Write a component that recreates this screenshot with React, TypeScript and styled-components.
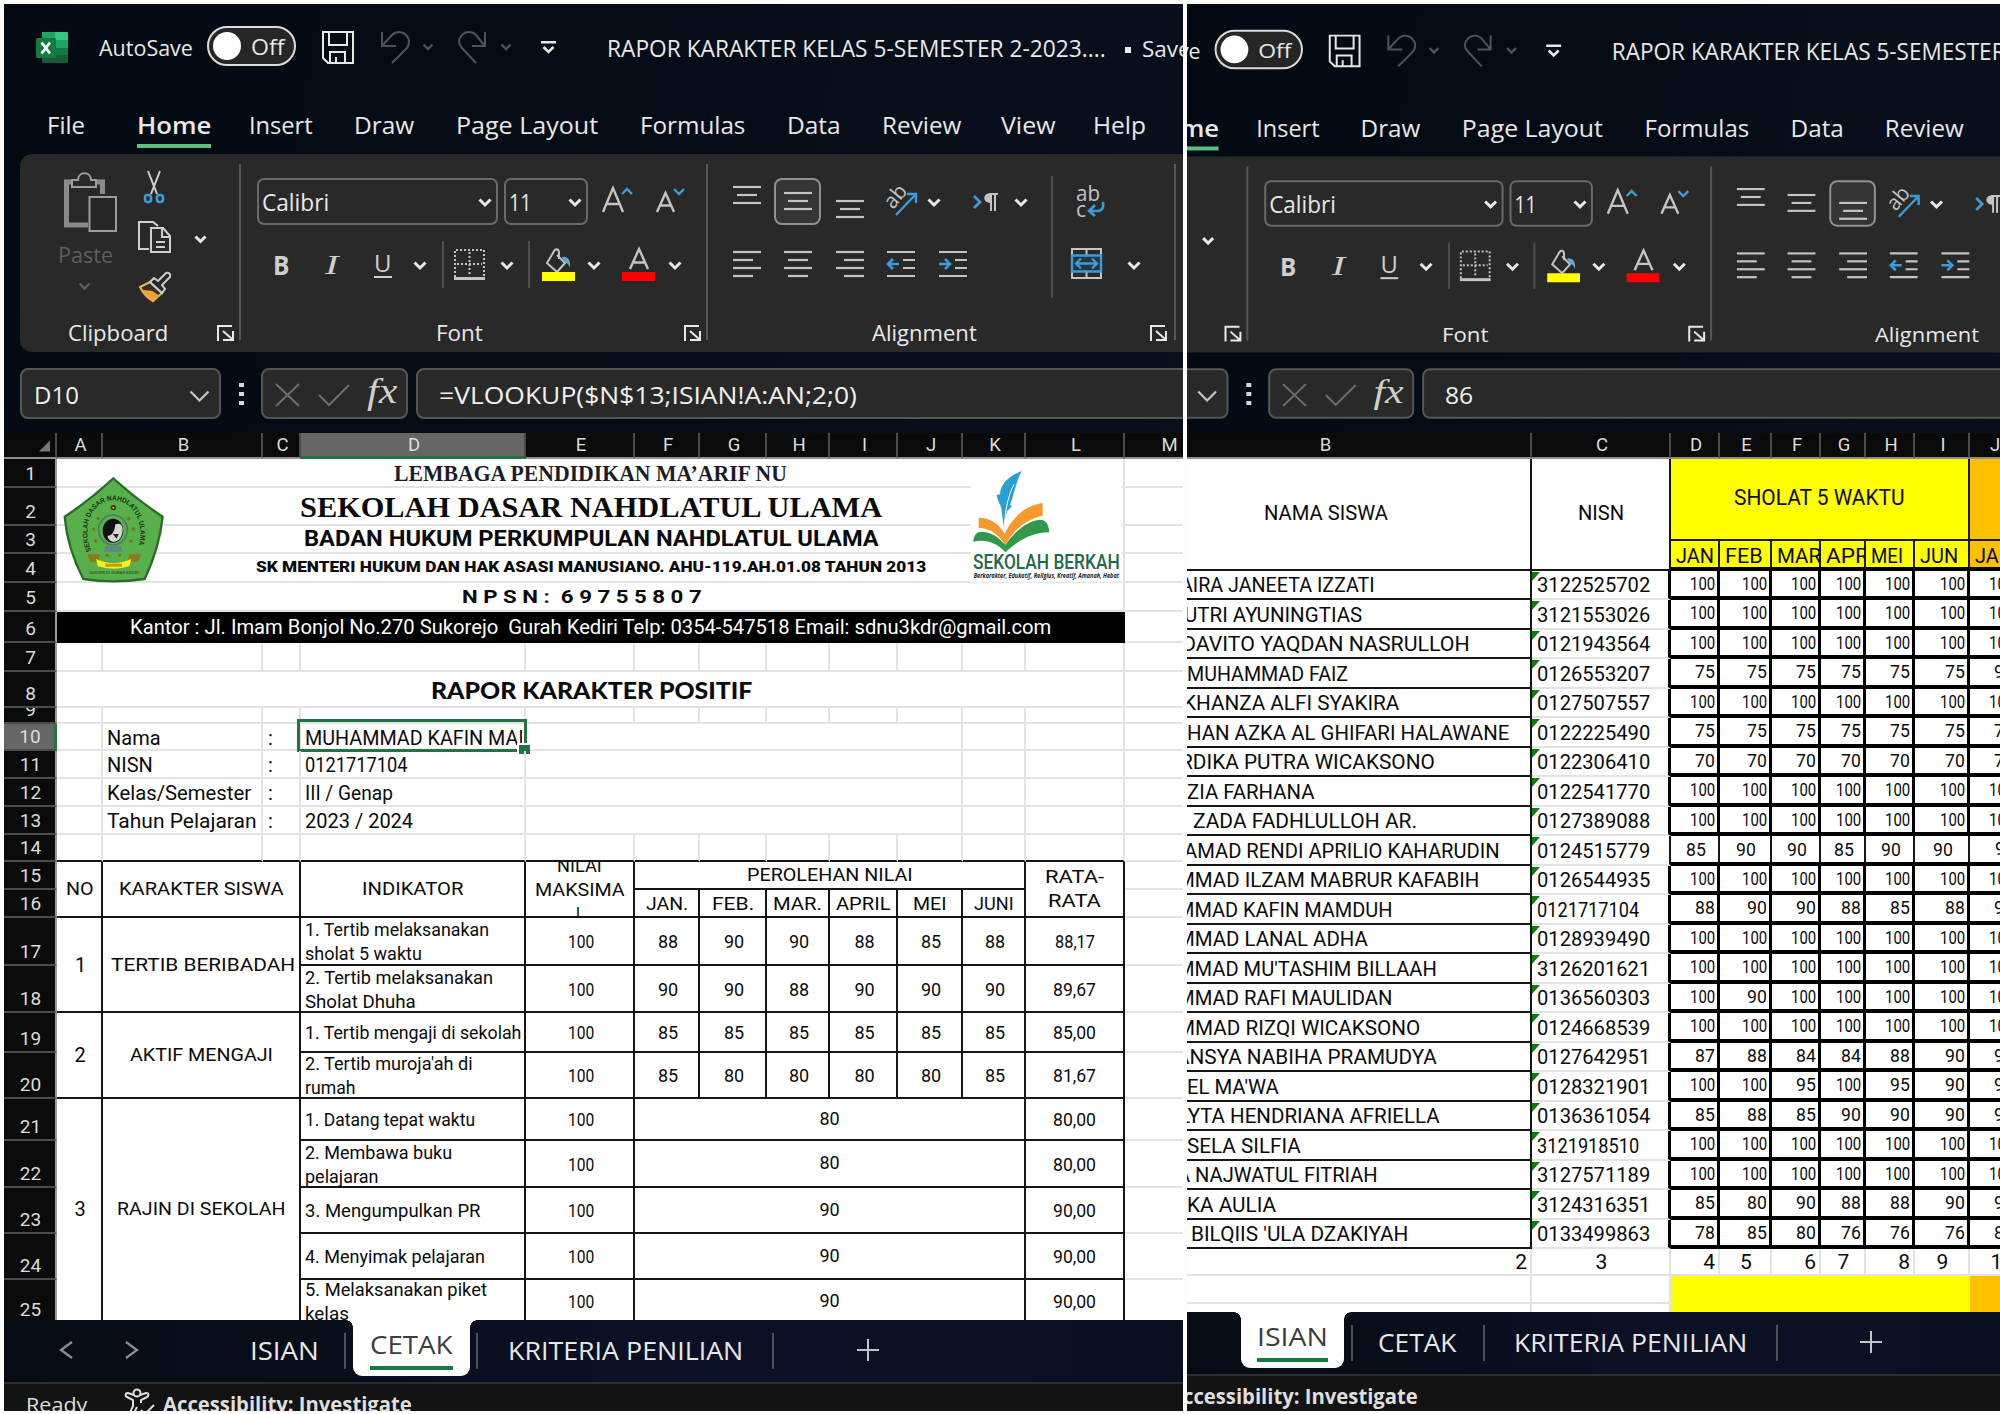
import React, { useLayoutEffect, useRef, useState } from 'react';
import styled, { createGlobalStyle, css } from 'styled-components';

const UI = '"Open Sans", "Noto Sans", sans-serif';
const GRID = 'Roboto, "Liberation Sans", sans-serif';
const INK = '#e8e8e8';
const BLUE = '#3f9bd8';
const BLACK = '#161616';
const LIGHT = '#e3e3e3';

const Global = createGlobalStyle`
  *, *::before, *::after { box-sizing: border-box; }
  body { margin: 0; background: #fdfdfd; overflow: hidden; }
`;

/* ---------- text that fills a known width ---------- */

const Slot = styled.span<{ $w: number }>`
  display: inline-block;
  flex: none;
  width: ${(p) => p.$w}px;
  white-space: pre;
  text-align: left;
`;
const Glyphs = styled.span`
  display: inline-block;
  transform-origin: 0 50%;
`;

function Fit({ w, children }: { w: number; children: React.ReactNode }) {
  const ref = useRef<HTMLSpanElement>(null);
  const [k, setK] = useState(1);
  useLayoutEffect(() => {
    if (ref.current && ref.current.offsetWidth) setK(w / ref.current.offsetWidth);
  }, [w, children]);
  return (
    <Slot $w={w}>
      <Glyphs ref={ref} style={{ transform: `scaleX(${k})` }}>{children}</Glyphs>
    </Slot>
  );
}

/* ---------- page frame ---------- */

const Page = styled.div`
  display: flex;
  gap: 4px;
  width: 2000px;
  height: 1414px;
  padding: 4px 0 3px 4px;
  background: #fdfdfd;
  overflow: hidden;
  font-family: ${UI};
`;
const Window = styled.section<{ $w: number }>`
  display: flex;
  flex-direction: column;
  flex: none;
  width: ${(p) => p.$w}px;
  height: 1407px;
  overflow: hidden;
  background: linear-gradient(100deg, #040a12 0%, #060c16 45%, #0a1020 100%);
`;
const ChromeSlot = styled.div`
  flex: none;
  height: 429px;
  overflow: hidden;
`;
const Chrome = styled.div<{ $shifted: boolean }>`
  width: 1179px;
  height: 440px;
  transform-origin: 0 0;
  ${(p) => p.$shifted && css`transform: translate(-174px, 3.9px) scale(0.993, 0.99);`}
`;

const Svg = styled.svg<{ $ml?: number; $mt?: number }>`
  display: block;
  flex: none;
  overflow: visible;
  margin-left: ${(p) => p.$ml ?? 0}px;
  margin-top: ${(p) => p.$mt ?? 0}px;
`;

/* ---------- title bar ---------- */

const TitleBar = styled.div`
  display: flex;
  align-items: center;
  height: 86px;
  color: ${INK};
`;
const TitleText = styled.span<{ $ml: number; $size: number; $mt?: number }>`
  display: flex;
  flex: none;
  margin-left: ${(p) => p.$ml}px;
  margin-top: ${(p) => p.$mt ?? 2}px;
  font-size: ${(p) => p.$size}px;
`;
const Toggle = styled.span`
  display: flex;
  flex: none;
  align-items: center;
  gap: 10px;
  width: 89px;
  height: 40px;
  margin: -3px 0 0 14px;
  padding-left: 4px;
  border: 2px solid #dcdcdc;
  border-radius: 20px;
  background: #262626;
  font-size: 21px;
`;
const ToggleLabel = styled.span`
  display: flex;
  margin-top: 3px;
`;
const Knob = styled.span`
  width: 28px;
  height: 28px;
  border-radius: 50%;
  background: #fff;
`;
const Dot = styled.span`
  flex: none;
  width: 6px;
  height: 6px;
  margin: 6px 0 0 19px;
  background: ${INK};
`;

function Chevron({ ml = 0, mt = 0, w = 14, color = INK, thick = 3 }: { ml?: number; mt?: number; w?: number; color?: string; thick?: number }) {
  return (
    <Svg $ml={ml} $mt={mt} width={w} height={w / 2 + 2} viewBox={`0 0 ${w} ${w / 2 + 2}`} fill="none" stroke={color} strokeWidth={thick}>
      <path d={`M1.5 1.5 L${w / 2} ${w / 2} L${w - 1.5} 1.5`} />
    </Svg>
  );
}

function ExcelIcon() {
  return (
    <Svg $ml={32} width={33} height={33} viewBox="0 0 33 33">
      <rect x="6" y="1" width="26" height="31" rx="1.5" fill="#185c37" />
      <path d="M6 1h13v8H6z" fill="#21a366" />
      <path d="M19 1h12a1 1 0 0 1 1 1v7H19z" fill="#33c481" />
      <path d="M6 9h13v8H6z" fill="#107c41" />
      <path d="M19 9h13v8H19z" fill="#21a366" />
      <path d="M19 17h13v7H19z" fill="#107c41" />
      <rect x="0" y="7" width="20" height="20" rx="1.5" fill="#107c41" />
      <path d="M5.500 11.500l8.500 11M14 11.500l-8.500 11" stroke="#fff" strokeWidth="2.8" />
    </Svg>
  );
}

function TitleRow() {
  return (
    <TitleBar>
      <ExcelIcon />
      <TitleText $ml={30} $size={21.5} $mt={1}><Fit w={94}>AutoSave</Fit></TitleText>
      <Toggle><Knob /><ToggleLabel><Fit w={33}>Off</Fit></ToggleLabel></Toggle>
      <Svg $ml={26} width={32} height={33} viewBox="0 0 32 33" fill="none" stroke={INK} strokeWidth="2">
        <path d="M1 1h30v31H6l-5-5z" />
        <path d="M7 1v13h18V1M8 32V21h15v11M14 32v-6" />
      </Svg>
      <Svg $ml={27} width={29} height={33} viewBox="0 0 29 33" fill="none" stroke="#505256" strokeWidth="2">
        <path d="M1 1v14h14M1 15L11 4c4-4 10-4 14 0s4 10 0 14L11 32" />
      </Svg>
      <Chevron ml={12} w={12} color="#505256" thick={2.4} />
      <Svg $ml={24} width={28} height={33} viewBox="0 0 28 33" fill="none" stroke="#505256" strokeWidth="2">
        <path d="M27 1v14H14M27 15L18 4C14 0 8 0 4 4s-4 9 0 13l14 15" />
      </Svg>
      <Chevron ml={14} w={12} color="#505256" thick={2.4} />
      <Svg $ml={29} width={15} height={13} viewBox="0 0 15 13" fill="none" stroke={INK} strokeWidth="2.6">
        <path d="M0 1.2h15M2.5 6l5 5 5-5" />
      </Svg>
      <TitleText $ml={51} $size={23.5} $mt={2}><Fit w={499}>RAPOR KARAKTER KELAS 5-SEMESTER 2-2023....</Fit></TitleText>
      <Dot />
      <TitleText $ml={11} $size={22.5} $mt={3}><Fit w={62}>Saved</Fit></TitleText>
    </TitleBar>
  );
}

/* ---------- ribbon tabs ---------- */

const TabRow = styled.nav`
  display: flex;
  align-items: flex-end;
  height: 64px;
  padding-bottom: 6px;
`;
const Tab = styled.span<{ $ml: number; $on: boolean }>`
  flex: none;
  margin-left: ${(p) => p.$ml}px;
  padding-bottom: 3px;
  border-bottom: 4px solid ${(p) => (p.$on ? '#5fbf83' : 'transparent')};
  color: ${INK};
  font-size: 24px;
  font-weight: ${(p) => (p.$on ? 600 : 400)};
  line-height: 32px;
`;
const TABS: [string, number, number][] = [
  ['File', 47, 38], ['Home', 137, 74], ['Insert', 249, 64], ['Draw', 354, 60], ['Page Layout', 456, 142],
  ['Formulas', 640, 105], ['Data', 787, 54], ['Review', 882, 79], ['View', 1001, 54], ['Help', 1093, 53],
];

/* ---------- ribbon ---------- */

const Ribbon = styled.div`
  display: flex;
  flex: none;
  width: 1180px;
  height: 198px;
  margin-left: 16px;
  border-radius: 12px 0 0 12px;
  background: #292929;
`;
const Group = styled.div<{ $w: number }>`
  display: flex;
  flex: none;
  flex-direction: column;
  width: ${(p) => p.$w}px;
`;
const GroupRule = styled.i`
  flex: none;
  width: 2px;
  height: 176px;
  margin: 10px 0 0 -1px;
  background: #565656;
`;
const Rule = styled.i<{ $ml: number; $h: number }>`
  flex: none;
  width: 2px;
  height: ${(p) => p.$h}px;
  margin-left: ${(p) => p.$ml}px;
  background: #4e4e4e;
`;
const ToolRow = styled.div<{ $mt: number }>`
  display: flex;
  align-items: center;
  height: 47px;
  margin-top: ${(p) => p.$mt}px;
`;
const LabelRow = styled.div<{ $mt: number; $pl: number }>`
  display: flex;
  align-items: center;
  height: 24px;
  margin-top: ${(p) => p.$mt}px;
  padding-left: ${(p) => p.$pl}px;
  color: ${INK};
  font-size: 21px;
  line-height: 24px;
`;
const ClipBody = styled.div`
  display: flex;
  align-items: flex-start;
  height: 152px;
  margin-top: 14px;
`;
const PasteColumn = styled.div`
  width: 72px;
  margin-left: 30px;
`;
const PasteLabel = styled.div`
  margin: 9px 0 0 8px;
  color: #5f5f5f;
  font-size: 22px;
  line-height: 26px;
`;
const ClipIcons = styled.div`
  width: 36px;
  margin-left: 15px;
`;
const Combo = styled.div<{ $w: number; $ml: number }>`
  display: flex;
  flex: none;
  align-items: center;
  justify-content: space-between;
  width: ${(p) => p.$w}px;
  height: 47px;
  margin-left: ${(p) => p.$ml}px;
  padding: 0 4px 0 3px;
  border: 2px solid #6a6a6a;
  border-radius: 7px;
  color: ${INK};
  font-size: 23px;
`;
const StyleLetter = styled.span<{ $ml: number; $kind: 'b' | 'i' | 'u' }>`
  flex: none;
  margin-left: ${(p) => p.$ml}px;
  color: #cfcfcf;
  font-size: 26px;
  line-height: 28px;
  ${(p) => p.$kind === 'b' && css`font-weight: 700;`}
  ${(p) => p.$kind === 'i' && css`font-family: "Liberation Serif", serif; font-style: italic; font-size: 28px;`}
  ${(p) => p.$kind === 'u' && css`height: 28px; margin-top: -1px; border-bottom: 2px solid #cfcfcf; font-size: 24px; line-height: 26px;`}
`;
const AlignButton = styled.span<{ $on: boolean; $ml: number }>`
  display: flex;
  flex: none;
  justify-content: center;
  width: 47px;
  height: 47px;
  margin-left: ${(p) => p.$ml}px;
  border: 2px solid ${(p) => (p.$on ? '#909090' : 'transparent')};
  border-radius: 8px;
  background: ${(p) => (p.$on ? '#353535' : 'transparent')};
`;
const AlignBody = styled.div`
  display: flex;
  height: 135px;
`;
const AlignMain = styled.div`
  width: 343px;
`;
const AlignRule = styled.i`
  flex: none;
  width: 2px;
  height: 122px;
  margin-top: 22px;
  background: #4e4e4e;
`;

function Launcher({ ml }: { ml: number }) {
  return (
    <Svg $ml={ml} width={17} height={16} viewBox="0 0 17 16" fill="none" stroke={INK} strokeWidth="2">
      <path d="M1 16V1h14M6 6l9 8M16 6v9H6" />
    </Svg>
  );
}

function Bars({ rows, ml = 0, mt = 0, h = 26 }: { rows: [number, number, number][]; ml?: number; mt?: number; h?: number }) {
  return (
    <Svg $ml={ml} $mt={mt} width={28} height={h} viewBox={`0 0 28 ${h}`} stroke="#c4c4c4" strokeWidth="2.2">
      {rows.map(([a, b, y]) => <path key={y} d={`M${a} ${y}H${b}`} />)}
    </Svg>
  );
}
const threeBars = (y: number): [number, number, number][] => [[0, 28, y], [4, 24, y + 8], [0, 28, y + 16]];

function IndentIcon({ dir, ml }: { dir: 'in' | 'out'; ml: number }) {
  return (
    <Svg $ml={ml} width={28} height={26} viewBox="0 0 28 26" fill="none" stroke="#c4c4c4" strokeWidth="2.2">
      <path d="M0 1h28M16 9h12M16 17h12M0 25h28" />
      <path stroke={BLUE} strokeWidth="2.6" d={dir === 'out' ? 'M12 13H1M6 8l-5 5 5 5' : 'M0 13h11M6 8l5 5-5 5'} />
    </Svg>
  );
}

function ClipboardGroup() {
  return (
    <Group $w={220}>
      <ClipBody>
        <PasteColumn>
          <Svg $ml={13} $mt={4} width={54} height={60} viewBox="0 0 54 60" fill="none" stroke="#9c9c9c">
            <path strokeWidth="5" stroke="#8a8a8a" d="M10 10H3.500V53H25M31 10h8.500V22" />
            <path strokeWidth="2" d="M9 15V8h6c0-9 13-9 13 0h5v7z" fill="#292929" />
            <path strokeWidth="2" d="M26.500 25h26.500v34H26.500z" fill="#262626" />
          </Svg>
          <PasteLabel><Fit w={55}>Paste</Fit></PasteLabel>
          <Chevron ml={28} mt={15} w={13} color="#5f5f5f" thick={2.4} />
        </PasteColumn>
        <ClipIcons>
          <Svg $ml={6} $mt={3} width={22} height={32} viewBox="0 0 22 32" fill="none" stroke="#cfcfcf" strokeWidth="2">
            <path d="M5 0l9 23M17 0L8 23" />
            <rect x="2" y="24" width="6" height="7" rx="2.500" stroke={BLUE} strokeWidth="2.600" />
            <rect x="14" y="24" width="6" height="7" rx="2.500" stroke={BLUE} strokeWidth="2.600" />
          </Svg>
          <Svg $ml={1} $mt={18} width={33} height={32} viewBox="0 0 33 32" fill="none" stroke="#cfcfcf" strokeWidth="2">
            <path d="M11 28H1V1h14l5 4" />
            <path d="M13 7h12l7 8v16H13zM24 7v9h8M18 21h9M18 26h9" />
          </Svg>
          <Svg $ml={2} $mt={19} width={32} height={30} viewBox="0 0 32 30" fill="none" strokeWidth="2">
            <path d="M1 15l10-5 12 11-9 8C8 26 4 21 1 15z" fill="#3a3020" stroke="#e8b35a" />
            <path d="M5 19l8 1 6 4-5 5z" fill="#f0a33a" stroke="#f0a33a" />
            <path d="M11 10l4-4 4 3 8-8c3-1 5 1 4 4l-8 8 3 4-3 4z" stroke="#cfcfcf" fill="#292929" />
          </Svg>
        </ClipIcons>
        <Chevron ml={21} mt={67} w={13} />
      </ClipBody>
      <LabelRow $mt={1} $pl={48}><Fit w={100}>Clipboard</Fit><Launcher ml={49} /></LabelRow>
    </Group>
  );
}

function FontGroup() {
  return (
    <Group $w={466}>
      <ToolRow $mt={24}>
        <Combo $w={241} $ml={16}><Fit w={67}>Calibri</Fit><Chevron mt={2} /></Combo>
        <Combo $w={84} $ml={6}><Fit w={22}>11</Fit><Chevron mt={2} /></Combo>
        <Svg $ml={14} $mt={-3} width={31} height={26} viewBox="0 0 31 26" fill="none" stroke="#c4c4c4" strokeWidth="2.4">
          <path d="M1 25L11 1l10 24M4.500 17h13" />
          <path stroke={BLUE} d="M20 7l5-5 5 5" />
        </Svg>
        <Svg $ml={23} $mt={-3} width={29} height={26} viewBox="0 0 29 26" fill="none" stroke="#c4c4c4" strokeWidth="2.4">
          <path d="M1 25L9.500 6 18 25M4 18.500h11" />
          <path stroke={BLUE} d="M18 2l5 5 5-5" />
        </Svg>
      </ToolRow>
      <ToolRow $mt={16}>
        <StyleLetter $ml={32} $kind="b"><Fit w={16}>B</Fit></StyleLetter>
        <StyleLetter $ml={36} $kind="i"><Fit w={13}>I</Fit></StyleLetter>
        <StyleLetter $ml={36} $kind="u"><Fit w={18}>U</Fit></StyleLetter>
        <Chevron ml={21} mt={2} />
        <Rule $ml={15} $h={47} />
        <Svg $ml={10} $mt={-1} width={31} height={31} viewBox="0 0 31 31" fill="none" stroke="#c4c4c4" strokeWidth="2">
          <path strokeDasharray="2 2" d="M1 28V1h29v27M15.500 3v24M3 15h25" />
          <path strokeWidth="3" d="M0 29.500h31" />
        </Svg>
        <Chevron ml={15} mt={2} />
        <Rule $ml={14} $h={47} />
        <Svg $ml={12} width={33} height={33} viewBox="0 0 33 33" fill="none" stroke="#c4c4c4" strokeWidth="2">
          <path d="M17 11V5c0-5-4-5-6 0L5 15l10 9 8-9-8-8" />
          <path d="M20 9c5-1 9 2 8 11-2-5-3-5-5-5z" fill="#5ea9dd" stroke="none" />
          <path d="M0 24h33v9H0z" fill="#ffff00" stroke="none" />
        </Svg>
        <Chevron ml={12} mt={2} />
        <Svg $ml={21} width={33} height={33} viewBox="0 0 33 33" fill="none" stroke="#c4c4c4" strokeWidth="2.4">
          <path d="M8 21L17 1l9 20M11 14.500h12" />
          <path d="M0 24h33v9H0z" fill="#ff0000" stroke="none" />
        </Svg>
        <Chevron ml={13} mt={2} />
      </ToolRow>
      <LabelRow $mt={33} $pl={195}><Fit w={47}>Font</Fit><Launcher ml={201} /></LabelRow>
    </Group>
  );
}

const SmallLetters = styled.text`
  font-family: ${UI};
  font-size: 21px;
  fill: #c4c4c4;
  stroke: none;
`;

function AlignmentGroup({ valign }: { valign: number }) {
  return (
    <Group $w={467}>
      <AlignBody>
        <AlignMain>
          <ToolRow $mt={24}>
            <AlignButton $ml={15} $on={valign === 0}><Bars rows={threeBars(7)} h={43} /></AlignButton>
            <AlignButton $ml={4} $on={valign === 1}><Bars rows={threeBars(13)} h={43} /></AlignButton>
            <AlignButton $ml={5} $on={valign === 2}><Bars rows={threeBars(21)} h={43} /></AlignButton>
            <Svg $ml={12} $mt={-2} width={33} height={31} viewBox="0 0 33 31" fill="none" stroke={BLUE} strokeWidth="2.400">
              <SmallLetters transform="translate(8 25) rotate(-50)" textLength="24" lengthAdjust="spacingAndGlyphs">ab</SmallLetters>
              <path d="M11 30L31 9M22 9h9v9" />
            </Svg>
            <Chevron ml={9} mt={2} />
            <Svg $ml={32} width={25} height={18} viewBox="0 0 25 18" fill="none" stroke="#c4c4c4" strokeWidth="2">
              <path stroke={BLUE} strokeWidth="2.800" d="M1 3l6 6-6 6" />
              <path d="M18 18V1M22 18V1M25 1h-8" />
              <path d="M18 0c-9 0-9 10 0 10z" fill="#c4c4c4" stroke="none" />
            </Svg>
            <Chevron ml={16} mt={2} />
          </ToolRow>
          <ToolRow $mt={15}>
            <Bars ml={25} rows={[[0, 28, 1], [0, 20, 9], [0, 28, 17], [0, 20, 25]]} />
            <Bars ml={23} rows={[[0, 28, 1], [4, 24, 9], [0, 28, 17], [4, 24, 25]]} />
            <Bars ml={24} rows={[[0, 28, 1], [8, 28, 9], [0, 28, 17], [8, 28, 25]]} />
            <IndentIcon ml={23} dir="out" />
            <IndentIcon ml={24} dir="in" />
          </ToolRow>
        </AlignMain>
        <AlignRule />
        <div>
          <ToolRow $mt={24}>
            <Svg $ml={23} width={29} height={31} viewBox="0 0 29 31" fill="none" stroke={BLUE} strokeWidth="2.600">
              <SmallLetters x="0" y="15" textLength="24" lengthAdjust="spacingAndGlyphs">ab</SmallLetters>
              <SmallLetters x="0" y="31">c</SmallLetters>
              <path d="M27 16c1 6-1 9-6 9h-7M19 19l-6 6 6 5" />
            </Svg>
          </ToolRow>
          <ToolRow $mt={15}>
            <Svg $ml={18} width={31} height={31} viewBox="0 0 31 31" fill="none" stroke="#c4c4c4" strokeWidth="2">
              <path d="M1 1h29v29H1zM15.500 1v6M15.500 24v6" />
              <path d="M1 7.500h29v16H1z" stroke={BLUE} strokeWidth="2.400" fill="#243645" />
              <path d="M5 15.500h21M10 10.500l-5 5 5 5M21 10.500l5 5-5 5" stroke={BLUE} strokeWidth="2.400" />
            </Svg>
            <Chevron ml={25} mt={3} />
          </ToolRow>
        </div>
      </AlignBody>
      <LabelRow $mt={32} $pl={164}><Fit w={105}>Alignment</Fit><Launcher ml={173} /></LabelRow>
    </Group>
  );
}

/* ---------- formula bar ---------- */

const FormulaBar = styled.div`
  display: flex;
  align-items: center;
  height: 51px;
  margin: 16px 0 0 16px;
  color: #f0f0f0;
  font-size: 24px;
`;
const Field = styled.div<{ $w: number; $ml: number; $pl: number }>`
  display: flex;
  flex: none;
  align-items: center;
  width: ${(p) => p.$w}px;
  height: 51px;
  margin-left: ${(p) => p.$ml}px;
  padding: 2px 0 0 ${(p) => p.$pl}px;
  border: 2px solid #555;
  border-radius: 8px;
  background: #292929;
`;
const FxLabel = styled.span`
  margin: -5px 0 0 17px;
  color: #d0d0d0;
  font-family: "Liberation Serif", serif;
  font-size: 35px;
  font-style: italic;
  line-height: 40px;
`;

function ExcelChrome({ shifted, cell, value, valueWidth, valign }: { shifted: boolean; cell: string; value: string; valueWidth: number; valign: number }) {
  return (
    <ChromeSlot>
      <Chrome $shifted={shifted}>
        <TitleRow />
        <TabRow>
          {TABS.map(([label, x, w], i) => {
            const prev = i ? TABS[i - 1][1] + TABS[i - 1][2] : 4;
            return <Tab key={label} $ml={x - prev} $on={label === 'Home'}><Fit w={w}>{label}</Fit></Tab>;
          })}
        </TabRow>
        <Ribbon>
          <ClipboardGroup />
          <GroupRule />
          <FontGroup />
          <GroupRule />
          <AlignmentGroup valign={valign} />
          <GroupRule />
        </Ribbon>
        <FormulaBar>
          <Field $w={201} $ml={0} $pl={12}>
            <Fit w={45}>{cell}</Fit>
            <Chevron ml={110} mt={3} w={21} color="#c8c8c8" thick={2.2} />
          </Field>
          <Svg $ml={18} width={5} height={24} viewBox="0 0 5 24" fill="#d8d8d8">
            <path d="M0 1h5v4H0zM0 10h5v4H0zM0 19h5v4H0z" />
          </Svg>
          <Field $w={147} $ml={17} $pl={12}>
            <Svg width={25} height={24} viewBox="0 0 25 24" fill="none" stroke="#6e6e6e" strokeWidth="2"><path d="M1 1l23 22M24 1L1 23" /></Svg>
            <Svg $ml={18} width={32} height={22} viewBox="0 0 32 22" fill="none" stroke="#6e6e6e" strokeWidth="2"><path d="M1 11l10 10L31 1" /></Svg>
            <FxLabel><Fit w={30}>fx</Fit></FxLabel>
          </Field>
          <Field $w={860} $ml={8} $pl={21}><Fit w={valueWidth}>{value}</Fit></Field>
        </FormulaBar>
      </Chrome>
    </ChromeSlot>
  );
}

/* ---------- worksheets ---------- */

const Columns = styled.div<{ $cols: number[] }>`
  display: grid;
  flex: none;
  grid-template-columns: ${(p) => p.$cols.map((c) => `${c}px`).join(' ')};
  height: 26px;
  background: #0a0a0a;
  border-bottom: 2px solid #8f8f8f;
`;
const ColumnName = styled.span<{ $on?: boolean; $pr?: number }>`
  display: flex;
  align-items: center;
  justify-content: center;
  height: 26px;
  padding: 0 ${(p) => p.$pr ?? 0}px 0 ${(p) => (p.$pr ? 0 : 3)}px;
  border-right: 2px solid #4b4b4b;
  background: ${(p) => (p.$on ? '#666' : 'transparent')};
  border-bottom: ${(p) => (p.$on ? '3px solid #217346' : '3px solid transparent')};
  color: #dcdcdc;
  font: 18.5px ${GRID};
  overflow: hidden;
`;
const Sheet = styled.div<{ $cols: number[]; $rows: number[]; $h: number }>`
  position: relative;
  display: grid;
  flex: none;
  grid-template-columns: ${(p) => p.$cols.map((c) => `${c}px`).join(' ')};
  grid-template-rows: ${(p) => p.$rows.map((c) => `${c}px`).join(' ')};
  height: ${(p) => p.$h}px;
  overflow: hidden;
  background: #fff;
  color: #0b0b0b;
  font-family: ${GRID};
`;
const RowName = styled.span<{ $r: number; $on: boolean }>`
  grid-area: ${(p) => p.$r} / 1;
  display: flex;
  align-items: flex-end;
  justify-content: center;
  padding-left: 2px;
  border-bottom: 2px solid #4b4b4b;
  border-right: ${(p) => (p.$on ? '3px solid #217346' : '2px solid #9a9a9a')};
  background: ${(p) => (p.$on ? '#666' : '#0a0a0a')};
  color: #dcdcdc;
  font-size: 19px;
  line-height: 24px;
  overflow: hidden;
`;
type CellProps = {
  $r: number; $c: number; $rs?: number; $cs?: number;
  $line?: string; $bottom?: string; $right?: string;
  $align?: string; $pad?: string; $size?: number; $bg?: string; $ink?: string; $weight?: number; $font?: string; $lh?: number; $clip?: boolean;
};
const Cell = styled.div<CellProps>`
  grid-area: ${(p) => `${p.$r} / ${p.$c} / span ${p.$rs ?? 1} / span ${p.$cs ?? 1}`};
  position: relative;
  display: flex;
  flex-direction: column;
  justify-content: center;
  align-items: ${(p) => p.$align ?? 'center'};
  min-width: 0;
  min-height: 0;
  padding: ${(p) => p.$pad ?? '2px 0 0'};
  border-right: ${(p) => p.$right ?? `2px solid ${p.$line ?? LIGHT}`};
  border-bottom: ${(p) => p.$bottom ?? `2px solid ${p.$line ?? LIGHT}`};
  background: ${(p) => p.$bg ?? 'transparent'};
  color: ${(p) => p.$ink ?? '#0b0b0b'};
  font-family: ${(p) => p.$font ?? GRID};
  font-size: ${(p) => p.$size ?? 18}px;
  font-weight: ${(p) => p.$weight ?? 400};
  line-height: ${(p) => p.$lh ?? 24}px;
  overflow: ${(p) => (p.$clip ? 'hidden' : 'visible')};
`;
const ClippedText = styled.div`
  width: 217px;
  overflow: hidden;
`;
const Selection = styled.i`
  position: absolute;
  inset: -5px -3px -3px -4px;
  border: 3px solid #217346;

  &::after {
    content: '';
    position: absolute;
    right: -6px;
    bottom: -7px;
    width: 13px;
    height: 13px;
    border: 2px solid #fff;
    border-right: 0;
    background: #217346;
  }
`;
const Emblem = styled.svg<{ $x: number; $y: number }>`
  position: absolute;
  left: ${(p) => p.$x}px;
  top: ${(p) => p.$y}px;
`;
const ErrorMark = styled.i`
  position: absolute;
  left: 0;
  top: 1px;
  border-top: 9px solid #0d7a12;
  border-right: 8px solid transparent;
`;

const steps = (edges: number[]) => edges.slice(1).map((e, i) => e - edges[i]);

const L_COLS = steps([4, 57, 103, 263, 301, 526, 635, 700, 767, 830, 898, 963, 1026, 1125, 1213]);
const L_ROWS = steps([459, 488, 526, 554, 583, 612, 643, 672, 708, 724, 751, 779, 807, 835, 862, 890, 918, 966, 1013, 1053, 1099, 1141, 1188, 1234, 1280, 1324]);

function SchoolEmblem() {
  return (
    <Emblem $x={46} $y={6} width={130} height={130} viewBox="0 0 390 390">
      <path d="M190 40Q120 105 44 155Q52 250 100 342Q190 356 284 342Q328 250 338 155Q262 105 190 40z" fill="#58b04a" stroke="#2c6a2b" strokeWidth="7" strokeLinejoin="round" />
      <path id="emblem-arc" d="M124 258C92 180 130 106 190 106S292 180 260 258" fill="none" />
      <text fontFamily="Liberation Sans" fontWeight="700" fontSize="21" fill="#17320f">
        <textPath href="#emblem-arc" textLength="372" lengthAdjust="spacingAndGlyphs">SEKOLAH DASAR NAHDLATUL ULAMA</textPath>
      </text>
      <circle cx="190" cy="128" r="8" fill="#3c2c0a" />
      <circle cx="190" cy="128" r="3" fill="#e9c93a" />
      {[[145, 160], [236, 161], [131, 192], [250, 192], [137, 228], [243, 228], [172, 271], [209, 271]].map(([x, y]) => (
        <circle key={`${x}-${y}`} cx={x} cy={y} r="5" fill="#6d7a12" />
      ))}
      <ellipse cx="189" cy="195" rx="43" ry="45" fill="none" stroke="#4c7d6c" strokeWidth="5" />
      <ellipse cx="189" cy="197" rx="31" ry="36" fill="#111" />
      <path d="M196 178c16-6 22 4 22 16 0 20-12 36-26 36-12 0-18-8-20-18 12 2 22-10 24-34z" fill="#d6d6d6" />
      <path d="M188 207h18l-6 14z" fill="#222" />
      <path d="M168 242h44l8 18h-60z" fill="#5b8a78" />
      <path d="M112 268h36v22h-28zM272 268h-36v22h30z" fill="#8b7a1d" />
      <path d="M138 282q52 24 106 0l-6 22q-46 14-94 0z" fill="#ffee1c" />
      <path d="M166 296h50v9h-50z" fill="#b89a15" />
      <text x="118" y="327" fontFamily="Liberation Sans" fontSize="11" fontWeight="700" fill="#2b5a22" textLength="148">SUKOREJO GURAH KEDIRI</text>
    </Emblem>
  );
}

function BerkahLogo() {
  return (
    <Emblem $x={956} $y={2} width={180} height={135} viewBox="0 0 540 405">
      <path d="M33 28h452v335H33z" fill="#fff" />
      <path d="M185 30C140 48 122 72 120 100l-10 2c2 16 10 24 14 40l8 62c2-22 4-40 10-54l14-14-6-4c10-24 18-70 35-102z" fill="#2a9fd6" />
      <path d="M162 70c-16 30-26 70-30 134" fill="none" stroke="#fff" strokeWidth="3" />
      <path d="M56 170c34 0 60 18 78 48 26-52 62-84 114-92v38c-52 12-86 42-112 88-22-34-46-50-80-52z" fill="#f79a2e" />
      <path d="M40 242c2-26 16-34 38-28 26 6 42 20 58 38 30-44 66-72 104-76 18 0 26 14 28 38-50 0-92 22-132 60-26-28-56-40-96-32z" fill="#31994b" />
      <text x="39" y="324" fontFamily="Roboto" fontSize="58" fontWeight="500" fill="#20694a" textLength="440" lengthAdjust="spacingAndGlyphs">SEKOLAH BERKAH</text>
      <text x="41" y="352" fontFamily="Open Sans" fontSize="21" fontWeight="700" fontStyle="italic" fill="#222" textLength="436" lengthAdjust="spacingAndGlyphs">Berkarakter, Edukatif, Religius, Kreatif, Amanah, Hebat</text>
    </Emblem>
  );
}

const digits = (v: string) => (v.length === 3 ? 25 : v.length === 2 ? 20 : 10);

type Line = [string, number];
const INDICATORS: { lines: Line[]; marks: string[]; avg: string }[] = [
  { lines: [['1. Tertib melaksanakan', 184], ['sholat 5 waktu', 117]], marks: ['88', '90', '90', '88', '85', '88'], avg: '88,17' },
  { lines: [['2. Tertib melaksanakan', 188], ['Sholat Dhuha', 111]], marks: ['90', '90', '88', '90', '90', '90'], avg: '89,67' },
  { lines: [['1. Tertib mengaji di sekolah', 216]], marks: ['85', '85', '85', '85', '85', '85'], avg: '85,00' },
  { lines: [["2. Tertib muroja'ah di", 168], ['rumah', 51]], marks: ['85', '80', '80', '80', '80', '85'], avg: '81,67' },
  { lines: [['1. Datang tepat waktu', 170]], marks: ['80'], avg: '80,00' },
  { lines: [['2. Membawa buku', 147], ['pelajaran', 73]], marks: ['80'], avg: '80,00' },
  { lines: [['3. Mengumpulkan PR', 176]], marks: ['90'], avg: '90,00' },
  { lines: [['4. Menyimak pelajaran', 180]], marks: ['90'], avg: '90,00' },
  { lines: [['5. Melaksanakan piket', 182], ['kelas', 44]], marks: ['90'], avg: '90,00' },
];
const MONTHS: Line[] = [['JAN.', 42], ['FEB.', 42], ['MAR.', 49], ['APRIL', 55], ['MEI', 34], ['JUNI', 40]];
const INFO: [Line, Line][] = [
  [['Nama', 54], ['MUHAMMAD KAFIN MAM', 231]],
  [['NISN', 46], ['0121717104', 102]],
  [['Kelas/Semester', 144], ['III / Genap', 88]],
  [['Tahun Pelajaran', 150], ['2023 / 2024', 108]],
];

function EmptyRow({ r }: { r: number }) {
  return <>{Array.from({ length: 12 }, (_, i) => <Cell key={i} $r={r} $c={i + 2} $bottom={r === 14 ? `2px solid ${BLACK}` : undefined} />)}</>;
}

function ReportSheet() {
  const serif = '"Liberation Serif", serif';
  return (
    <>
      <Columns $cols={L_COLS}>
        <ColumnName>
          <Svg $ml={26} $mt={3} width={11} height={12} viewBox="0 0 12 12"><path d="M12 0v12H0z" fill="#777" /></Svg>
        </ColumnName>
        {'ABCDEFGHIJKLM'.split('').map((n) => <ColumnName key={n} $on={n === 'D'}>{n}</ColumnName>)}
      </Columns>
      <Sheet $cols={L_COLS} $rows={L_ROWS} $h={861}>
        {Array.from({ length: 25 }, (_, i) => <RowName key={i} $r={i + 1} $on={i === 9}>{i + 1}</RowName>)}
        <Cell $r={1} $c={2} $cs={12} $font={serif} $size={23} $weight={700} $ink="#1c1c28" $pad="2px 0 0"><Fit w={393}>LEMBAGA PENDIDIKAN MA’ARIF NU</Fit></Cell>
        <Cell $r={2} $c={2} $cs={12} $font={serif} $size={29} $weight={700} $pad="1px 0 0 1px"><Fit w={582}>SEKOLAH DASAR NAHDLATUL ULAMA</Fit></Cell>
        <Cell $r={3} $c={2} $cs={12} $size={21.5} $weight={700} $pad="0 0 0 3px"><Fit w={575}>BADAN HUKUM PERKUMPULAN NAHDLATUL ULAMA</Fit></Cell>
        <Cell $r={4} $c={2} $cs={12} $size={14} $weight={900} $pad="0 0 1px 2px"><Fit w={670}>SK MENTERI HUKUM DAN HAK ASASI MANUSIANO. AHU-119.AH.01.08 TAHUN 2013</Fit></Cell>
        <Cell $r={5} $c={2} $cs={12} $size={19} $weight={700} $pad="0 16px 0 0"><Fit w={240}>N P S N :  6 9 7 5 5 8 0 7</Fit></Cell>
        <Cell $r={6} $c={2} $cs={12} $size={20} $line="#000" $bg="#000" $ink="#fff" $pad="0"><Fit w={921}>Kantor : Jl. Imam Bonjol No.270 Sukorejo  Gurah Kediri Telp: 0354-547518 Email: sdnu3kdr@gmail.com</Fit></Cell>
        <EmptyRow r={7} />
        <Cell $r={8} $c={2} $cs={12} $font='Lato, "Open Sans", sans-serif' $size={23.5} $weight={900} $pad="2px 0 0 3px"><Fit w={321}>RAPOR KARAKTER POSITIF</Fit></Cell>
        <EmptyRow r={9} />
        {INFO.map(([label, value], i) => (
          <React.Fragment key={label[0]}>
            <Cell $r={10 + i} $c={2} />
            <Cell $r={10 + i} $c={3} $align="flex-start" $size={20} $pad="2px 0 0 4px"><Fit w={label[1]}>{label[0]}</Fit></Cell>
            <Cell $r={10 + i} $c={4} $align="flex-start" $size={20} $pad="2px 0 0 5px">:</Cell>
            <Cell $r={10 + i} $c={6} $cs={6} />
            <Cell $r={10 + i} $c={12} />
            <Cell $r={10 + i} $c={13} />
            <Cell $r={10 + i} $c={5} $align="flex-start" $size={20} $pad="2px 0 0 4px">
              <ClippedText><Fit w={value[1]}>{value[0]}</Fit></ClippedText>
              {i === 0 && <Selection />}
            </Cell>
          </React.Fragment>
        ))}
        <EmptyRow r={14} />
        <Cell $r={15} $c={2} $rs={2} $line={BLACK} $size={19} $pad="0 0 0 2px"><Fit w={28}>NO</Fit></Cell>
        <Cell $r={15} $c={3} $rs={2} $cs={2} $line={BLACK} $size={19} $pad="0"><Fit w={164}>KARAKTER SISWA</Fit></Cell>
        <Cell $r={15} $c={5} $rs={2} $line={BLACK} $size={19} $pad="0"><Fit w={101}>INDIKATOR</Fit></Cell>
        <Cell $r={15} $c={6} $rs={2} $line={BLACK} $size={19} $clip $lh={24} $pad="2px 0 0"><Fit w={45}>NILAI</Fit><Fit w={90}>MAKSIMA</Fit><Fit w={8}>L</Fit></Cell>
        <Cell $r={15} $c={7} $cs={6} $line={BLACK} $size={19} $pad="0"><Fit w={166}>PEROLEHAN NILAI</Fit></Cell>
        {MONTHS.map(([m, w], i) => <Cell key={m} $r={16} $c={7 + i} $line={BLACK} $size={19}><Fit w={w}>{m}</Fit></Cell>)}
        <Cell $r={15} $c={13} $rs={2} $line={BLACK} $size={19} $pad="0"><Fit w={59}>RATA-</Fit><Fit w={53}>RATA</Fit></Cell>
        <Cell $r={17} $c={2} $rs={2} $line={BLACK} $size={20} $pad="0 0 0 3px">1</Cell>
        <Cell $r={17} $c={3} $rs={2} $cs={2} $line={BLACK} $size={19} $pad="0 0 0 3px"><Fit w={184}>TERTIB BERIBADAH</Fit></Cell>
        <Cell $r={19} $c={2} $rs={2} $line={BLACK} $size={20} $pad="0 0 0 2px">2</Cell>
        <Cell $r={19} $c={3} $rs={2} $cs={2} $line={BLACK} $size={19} $pad="0"><Fit w={143}>AKTIF MENGAJI</Fit></Cell>
        <Cell $r={21} $c={2} $rs={5} $line={BLACK} $size={20} $pad="0 0 4px 2px">3</Cell>
        <Cell $r={21} $c={3} $rs={5} $cs={2} $line={BLACK} $size={19} $pad="0 0 3px 1px"><Fit w={169}>RAJIN DI SEKOLAH</Fit></Cell>
        {INDICATORS.map((row, i) => (
          <React.Fragment key={i}>
            <Cell $r={17 + i} $c={5} $line={BLACK} $align="flex-start" $pad="2px 0 0 4px">
              {row.lines.map(([t, w]) => <Fit key={t} w={w}>{t}</Fit>)}
            </Cell>
            <Cell $r={17 + i} $c={6} $line={BLACK} $pad="2px 0 0 2px"><Fit w={26}>100</Fit></Cell>
            {row.marks.map((m, j) => (
              <Cell key={j} $r={17 + i} $c={7 + j} $cs={row.marks.length === 1 ? 6 : 1} $line={BLACK} $pad={row.marks.length === 1 ? '0 0 1px' : '2px 0 0 3px'}><Fit w={20}>{m}</Fit></Cell>
            ))}
            <Cell $r={17 + i} $c={13} $line={BLACK}><Fit w={row.avg.includes('17') ? 40 : 43}>{row.avg}</Fit></Cell>
          </React.Fragment>
        ))}
        {Array.from({ length: 25 }, (_, i) => <Cell key={i} $r={i + 1} $c={14} />)}
        <SchoolEmblem />
        <BerkahLogo />
      </Sheet>
    </>
  );
}

/* name, left edge, right edge, NISN, monthly marks */
const STUDENTS: [string, number, number, string, string][] = [
  ['AIRA JANEETA IZZATI', 1180, 1375, '3122525702', '100 100 100 100 100 100 100'],
  ['UTRI AYUNINGTIAS', 1184, 1362, '3121553026', '100 100 100 100 100 100 100'],
  ['DAVITO YAQDAN NASRULLOH', 1182, 1470, '0121943564', '100 100 100 100 100 100 100'],
  ['MUHAMMAD FAIZ', 1187, 1348, '0126553207', '75 75 75 75 75 75 90'],
  ['KHANZA ALFI SYAKIRA', 1183, 1399, '0127507557', '100 100 100 100 100 100 100'],
  ['HAN AZKA AL GHIFARI HALAWANE', 1187, 1509, '0122225490', '75 75 75 75 75 75 75'],
  ['RDIKA PUTRA WICAKSONO', 1180, 1435, '0122306410', '70 70 70 70 70 70 70'],
  ['ZIA FARHANA', 1187, 1315, '0122541770', '100 100 100 100 100 100 100'],
  ['ZADA FADHLULLOH AR.', 1193, 1417, '0127389088', '100 100 100 100 100 100 100'],
  ['AMAD RENDI APRILIO KAHARUDIN', 1184, 1500, '0124515779', '85 90 90 85 90 90 90'],
  ['MMAD ILZAM MABRUR KAFABIH', 1177, 1479, '0126544935', '100 100 100 100 100 100 100'],
  ['MMAD KAFIN MAMDUH', 1177, 1392, '0121717104', '88 90 90 88 85 88 90'],
  ['MMAD LANAL ADHA', 1177, 1368, '0128939490', '100 100 100 100 100 100 100'],
  ["MMAD MU'TASHIM BILLAAH", 1177, 1437, '3126201621', '100 100 100 100 100 100 100'],
  ['MMAD RAFI MAULIDAN', 1177, 1392, '0136560303', '100 90 100 100 100 100 100'],
  ['MMAD RIZQI WICAKSONO', 1177, 1420, '0124668539', '100 100 100 100 100 100 100'],
  ['ANSYA NABIHA PRAMUDYA', 1176, 1437, '0127642951', '87 88 84 84 88 90 90'],
  ["EL MA'WA", 1187, 1279, '0128321901', '100 100 95 100 95 90 90'],
  ['LYTA HENDRIANA AFRIELLA', 1179, 1440, '0136361054', '85 88 85 90 90 90 90'],
  ['SELA SILFIA', 1187, 1301, '3121918510', '100 100 100 100 100 100 100'],
  ['A NAJWATUL FITRIAH', 1177, 1378, '3127571189', '100 100 100 100 100 100 100'],
  ['KA AULIA', 1187, 1276, '3124316351', '85 80 90 88 88 90 90'],
  ["BILQIIS 'ULA DZAKIYAH", 1191, 1408, '0133499863', '78 85 80 76 76 76 80'],
];
const R_COLS = steps([1187, 1532, 1671, 1720, 1772, 1821, 1866, 1915, 1970, 2019]);
const R_ROWS = steps([459, 541, 571, ...STUDENTS.map((_, i) => Math.round(571 + 29.48 * (i + 1))), 1276, 1304, 1330]);
const SHORT_MONTHS: Line[] = [['JAN', 38], ['FEB', 38], ['MAR', 44], ['APR', 43], ['MEI', 32], ['JUN', 38], ['JAN', 38]];
const FOOT: [string, string][] = [['2', 'flex-end'], ['3', 'center'], ['4', 'flex-end'], ['5', 'center'], ['6', 'flex-end'], ['7', 'center'], ['8', 'flex-end'], ['9', 'center'], ['10', 'flex-end']];
const Nudge = styled.span<{ $x: number }>`
  display: flex;
  margin-left: ${(p) => p.$x}px;
`;

function EntrySheet() {
  const thin = `2px solid ${BLACK}`;
  return (
    <>
      <Columns $cols={R_COLS}>
        {'BCDEFGHIJ'.split('').map((n) => <ColumnName key={n} $pr={n === 'B' ? 66 : undefined}>{n}</ColumnName>)}
      </Columns>
      <Sheet $cols={R_COLS} $rows={R_ROWS} $h={853}>
        <Cell $r={1} $c={1} $rs={2} $line={BLACK} $size={21} $pad="0 66px 3px 0"><Fit w={124}>NAMA SISWA</Fit></Cell>
        <Cell $r={1} $c={2} $rs={2} $line={BLACK} $size={21} $pad="0 0 3px"><Fit w={46}>NISN</Fit></Cell>
        <Cell $r={1} $c={3} $cs={6} $line={BLACK} $bg="#ffff00" $size={22} $pad="0 0 2px"><Fit w={171}>SHOLAT 5 WAKTU</Fit></Cell>
        <Cell $r={1} $c={9} $line={BLACK} $bg="#ffc000" />
        {SHORT_MONTHS.map(([m, w], i) => (
          <Cell key={i} $r={2} $c={3 + i} $line={BLACK} $bottom="4px solid #000" $bg={i === 6 ? '#ffc000' : '#ffff00'} $size={21} $align="flex-start" $pad="4px 0 0 5px" $clip><Fit w={w}>{m}</Fit></Cell>
        ))}
        {STUDENTS.map(([name, x0, x1, nisn, marks], i) => {
          const loose = i === 9;
          return (
            <React.Fragment key={nisn}>
              <Cell $r={3 + i} $c={1} $line={BLACK} $size={20.5} $align="flex-start" $pad="1px 0 0"><Nudge $x={x0 - 1187}><Fit w={x1 - x0}>{name}</Fit></Nudge></Cell>
              <Cell $r={3 + i} $c={2} $size={20.5} $align="flex-start" $pad="1px 0 0 5px" $right={loose ? thin : '3px solid #000'}>
                <Fit w={name.includes('KAFIN') || nisn === '3121918510' ? 102 : 113}>{nisn}</Fit>
                <ErrorMark />
              </Cell>
              {marks.split(' ').map((m, j) => {
                const centered = loose && j < 6;
                return (
                  <Cell key={j} $r={3 + i} $c={3 + j} $size={18.5} $align={centered ? 'center' : 'flex-end'} $pad={centered ? '1px 0 0 2px' : '0 2px 0 0'} $bottom="4px solid #000" $right={loose ? thin : '3px solid #000'}>
                    <Fit w={digits(m)}>{m}</Fit>
                  </Cell>
                );
              })}
            </React.Fragment>
          );
        })}
        {FOOT.map(([n, align], i) => <Cell key={i} $r={26} $c={1 + i} $size={21} $align={align} $pad={align === 'center' ? '0 0 0 2px' : '0 3px 0 0'}>{n}</Cell>)}
        <Cell $r={27} $c={1} />
        <Cell $r={27} $c={2} />
        <Cell $r={28} $c={1} />
        <Cell $r={28} $c={2} />
        <Cell $r={27} $c={3} $rs={2} $cs={6} $bg="#ffff00" $line="#ffff00" />
        <Cell $r={27} $c={9} $rs={2} $bg="#ffc000" $line="#ffc000" />
      </Sheet>
    </>
  );
}

/* ---------- sheet tabs and status bar ---------- */

const SheetTabs = styled.div`
  display: flex;
  flex: none;
  align-items: center;
  height: 64px;
  border-bottom: 2px solid #2e2e30;
  background: linear-gradient(90deg, #070b14, #0b1124 60%, #0a1020);
  color: ${INK};
  font-size: 26px;
`;
const SheetTab = styled.span<{ $ml: number }>`
  flex: none;
  margin-left: ${(p) => p.$ml}px;
  margin-top: -2px;
`;
const ActiveTab = styled.span<{ $ml: number; $pad: number }>`
  position: relative;
  flex: none;
  align-self: flex-start;
  height: 56px;
  margin-left: ${(p) => p.$ml}px;
  padding: 2px ${(p) => p.$pad}px 0;
  border-radius: 0 0 9px 9px;
  background: #fff;
  color: #3c3c3c;
  font-weight: 500;
  line-height: 44px;

  &::before, &::after {
    content: '';
    position: absolute;
    top: 0;
    width: 7px;
    height: 7px;
  }
  &::before { left: -7px; background: radial-gradient(circle at 0 100%, transparent 6.5px, #fff 7px); }
  &::after { right: -7px; background: radial-gradient(circle at 100% 100%, transparent 6.5px, #fff 7px); }
`;
const Underline = styled.i`
  display: block;
  height: 4px;
  background: #107c41;
`;
const TabRule = styled.i<{ $ml: number }>`
  flex: none;
  width: 2px;
  height: 36px;
  margin-left: ${(p) => p.$ml}px;
  background: #4d5059;
`;
const StatusBar = styled.div`
  display: flex;
  flex: 1;
  min-height: 0;
  background: #131313;
  color: #dedede;
  font-size: 20.5px;
  line-height: 41px;
  overflow: hidden;
`;
const StatusText = styled.span<{ $ml: number; $bold?: boolean }>`
  flex: none;
  height: 41px;
  margin-left: ${(p) => p.$ml}px;
  font-weight: ${(p) => (p.$bold ? 700 : 400)};
`;

function Plus({ ml }: { ml: number }) {
  return <Svg $ml={ml} $mt={-2} width={22} height={22} viewBox="0 0 22 22" stroke="#c4c4c4" strokeWidth="2"><path d="M0 11h22M11 0v22" /></Svg>;
}

export default function App() {
  return (
    <>
      <Global />
      <Page>
        <Window $w={1179}>
          <ExcelChrome shifted={false} cell="D10" value="=VLOOKUP($N$13;ISIAN!A:AN;2;0)" valueWidth={418} valign={1} />
          <ReportSheet />
          <SheetTabs>
            <Svg $ml={56} $mt={-2} width={13} height={18} viewBox="0 0 13 18" fill="none" stroke="#8c8f96" strokeWidth="2.2"><path d="M12 1L1 9l11 8" /></Svg>
            <Svg $ml={52} $mt={-2} width={13} height={18} viewBox="0 0 13 18" fill="none" stroke="#8c8f96" strokeWidth="2.2"><path d="M1 1l11 8-11 8" /></Svg>
            <SheetTab $ml={112}><Fit w={69}>ISIAN</Fit></SheetTab>
            <TabRule $ml={25} />
            <ActiveTab $ml={7} $pad={17}><Fit w={83}>CETAK</Fit><Underline /></ActiveTab>
            <TabRule $ml={6} />
            <SheetTab $ml={30}><Fit w={235}>KRITERIA PENILIAN</Fit></SheetTab>
            <TabRule $ml={29} />
            <Plus ml={83} />
          </SheetTabs>
          <StatusBar>
            <StatusText $ml={22}><Fit w={61}>Ready</Fit></StatusText>
            <Svg $ml={38} $mt={4} width={30} height={30} viewBox="0 0 30 30" fill="none" stroke="#dedede" strokeWidth="2">
              <circle cx="12" cy="5" r="3.500" />
              <path d="M9 7L3 5C0 5 0 8 2 9l6 3v6l-4 9c0 2 3 2 4 0l4-8M15 7l6-2c3 0 3 3 1 4l-6 3v3" />
              <path d="M16 22l4 4 9-9" />
            </Svg>
            <StatusText $ml={8} $bold><Fit w={249}>Accessibility: Investigate</Fit></StatusText>
          </StatusBar>
        </Window>
        <Window $w={813}>
          <ExcelChrome shifted cell="D10" value="86" valueWidth={28} valign={2} />
          <EntrySheet />
          <SheetTabs>
            <ActiveTab $ml={54} $pad={16}><Fit w={71}>ISIAN</Fit><Underline /></ActiveTab>
            <TabRule $ml={7} />
            <SheetTab $ml={25}><Fit w={79}>CETAK</Fit></SheetTab>
            <TabRule $ml={26} />
            <SheetTab $ml={29}><Fit w={233}>KRITERIA PENILIAN</Fit></SheetTab>
            <TabRule $ml={29} />
            <Plus ml={82} />
          </SheetTabs>
          <StatusBar>
            <StatusText $ml={-18} $bold><Fit w={249}>Accessibility: Investigate</Fit></StatusText>
          </StatusBar>
        </Window>
      </Page>
    </>
  );
}
